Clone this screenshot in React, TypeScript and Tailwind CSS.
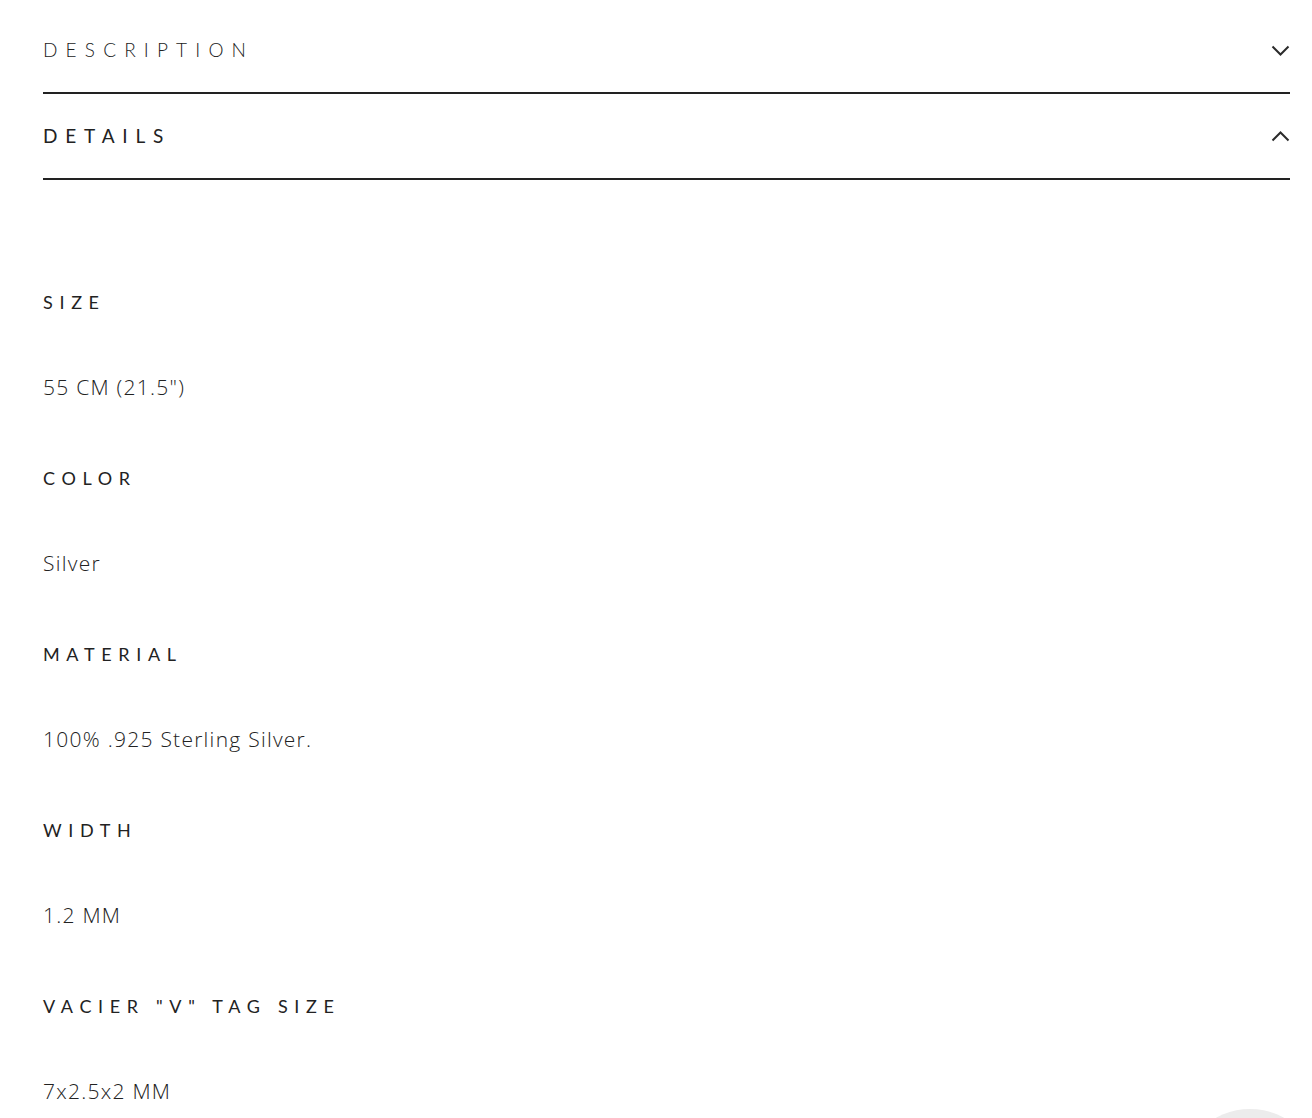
import React, { useState } from "react";

const details = [
  { label: "Size", value: '55 CM (21.5")' },
  { label: "Color", value: "Silver" },
  { label: "Material", value: "100% .925 Sterling Silver." },
  { label: "Width", value: "1.2 MM" },
  { label: 'Vacier "V" Tag Size', value: "7x2.5x2 MM" },
];

function Chevron({ up }: { up?: boolean }) {
  return (
    <svg width="19" height="11" viewBox="0 0 19 11" fill="none" className="text-[#2b2b2b]">
      <path
        d={up ? "M1.5 9.5 L9.5 1.5 L17.5 9.5" : "M1.5 1.5 L9.5 9.5 L17.5 1.5"}
        stroke="currentColor"
        strokeWidth="2"
      />
    </svg>
  );
}

export default function App() {
  const [open, setOpen] = useState("details");

  return (
    <div
      className="relative min-h-screen overflow-hidden bg-white pl-[43px] pr-[22px] pt-2 text-[#222]"
      style={{ fontFamily: "Lato, 'Noto Sans', sans-serif" }}
    >
      {/* description, collapsed */}
      <button
        onClick={() => setOpen(open === "description" ? "" : "description")}
        className="flex h-[86px] w-full items-center justify-between border-b-2 border-[#222] text-left"
      >
        <span className="text-[19px] font-light uppercase tracking-[0.43em]">Description</span>
        <Chevron up={open === "description"} />
      </button>

      {/* details, open */}
      <button
        onClick={() => setOpen(open === "details" ? "" : "details")}
        className="flex h-[86px] w-full items-center justify-between border-b-2 border-[#222] text-left"
      >
        <span className="text-[19px] font-normal uppercase tracking-[0.41em]">Details</span>
        <Chevron up={open === "details"} />
      </button>

      <div className="pt-[112px]">
        {details.map((d) => (
          <div key={d.label} className="mb-[71px]">
            <div className="text-[18px] font-normal uppercase leading-[20px] tracking-[0.37em]">{d.label}</div>
            <div className="mt-[65px] font-['Open_Sans',sans-serif] text-[21px] font-light leading-[20px] tracking-[0.06em] text-[#222]">
              {d.value}
            </div>
          </div>
        ))}
      </div>

      {/* chat bubble peeking in */}
      <div className="absolute left-[1180px] top-[1109px] h-[140px] w-[140px] rounded-full bg-[#ececec]" />
    </div>
  );
}
